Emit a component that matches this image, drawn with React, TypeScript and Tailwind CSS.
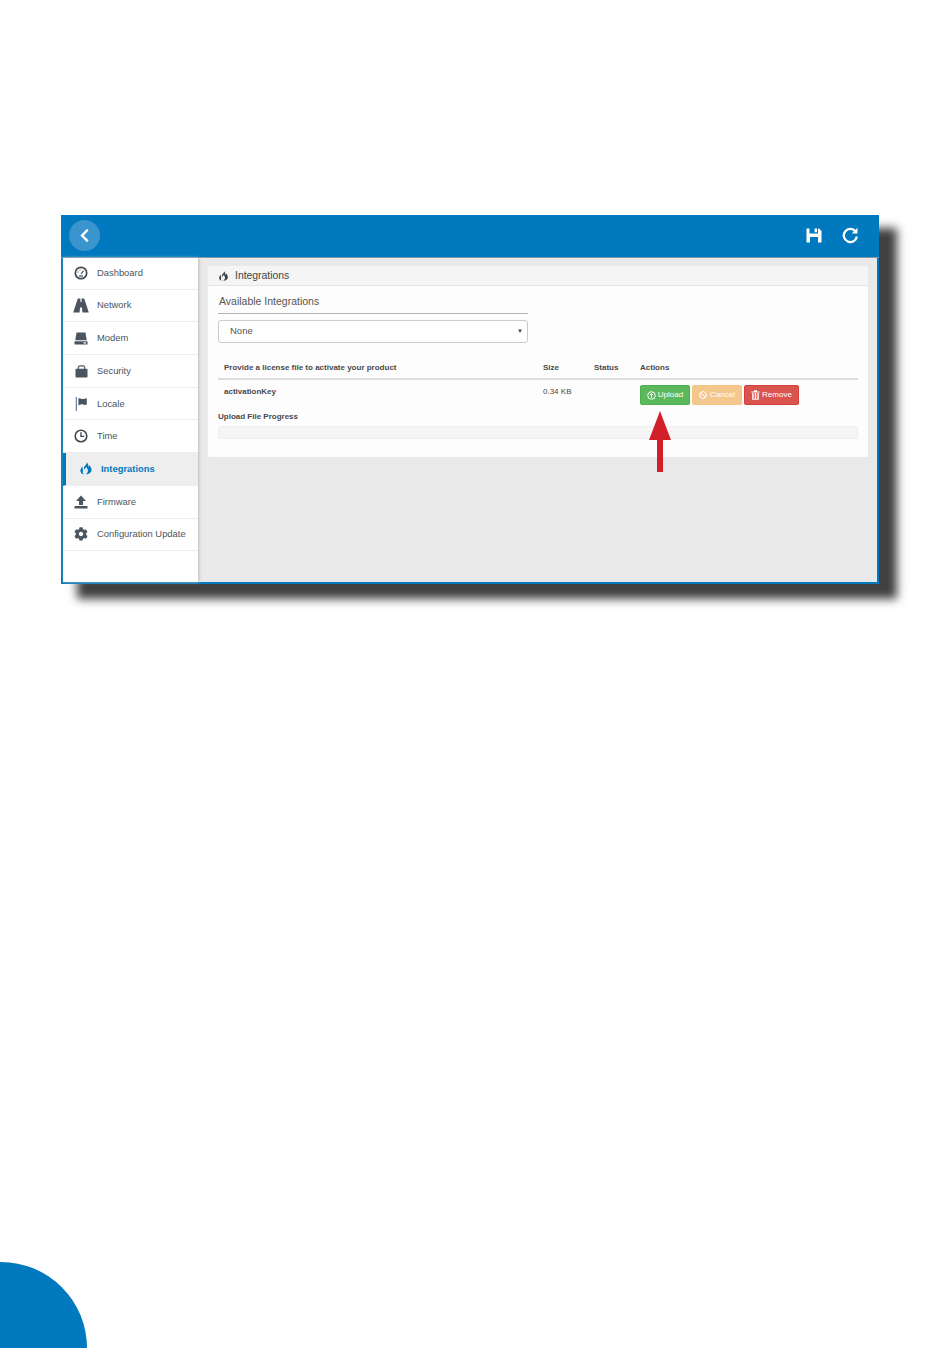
import React from 'react';
import { FaChevronLeft, FaBan, FaCog } from 'react-icons/fa';

const Gauge = () => (
  <svg viewBox="0 0 14 14" className="w-[14px] h-[14px]">
    <circle cx="7" cy="7" r="5.7" fill="#fff" stroke="#3f4a54" strokeWidth="1.7" />
    <path d="M7 8 L9.6 4.6" stroke="#3f4a54" strokeWidth="1.1" />
    <circle cx="4" cy="6" r="0.7" fill="#5b7fa0" />
    <circle cx="6" cy="4" r="0.7" fill="#a87b5b" />
    <rect x="5" y="9.4" width="4" height="1.2" fill="#3f4a54" />
  </svg>
);

const Road = () => (
  <svg viewBox="0 0 16 15" className="w-[16px] h-[15px]" fill="#4a5560">
    <path d="M4.8 0.5 H7.4 V4 H8.6 V0.5 H11.2 L15.8 14.5 H9.4 L9 9.5 H7 L6.6 14.5 H0.2 Z" />
  </svg>
);

const Drive = () => (
  <svg viewBox="0 0 14 13" className="w-[14px] h-[13px]" fill="#4a5560">
    <path d="M2.6 0.5 H11.4 L12.8 8.3 H1.2 Z" />
    <path d="M0.5 9.2 H13.5 V12.5 H0.5 Z M9.5 10.3 V11.4 H12 V10.3 Z" fillRule="evenodd" />
  </svg>
);

const Lock = () => (
  <svg viewBox="0 0 13 14" className="w-[13px] h-[14px]" fill="#4a5560">
    <path d="M3.4 5 V3.4 C3.4 1.2 9.6 1.2 9.6 3.4 V5" fill="none" stroke="#6b747d" strokeWidth="1.4" />
    <rect x="0.5" y="4.8" width="12" height="8.7" rx="0.8" />
  </svg>
);

const Flag = () => (
  <svg viewBox="0 0 13 14" className="w-[13px] h-[14px]" fill="#4a5560">
    <rect x="0.8" y="0" width="1" height="14" fill="#4a6a8a" />
    <path d="M3.4 1.6 C5.4 0.4 6.6 2.4 8.2 2 L11.8 1.2 V7.6 C9.6 8.8 7.6 7 6 7.4 L3.4 8.2 Z" />
  </svg>
);

const Clock = () => (
  <svg viewBox="0 0 14 14" className="w-[14px] h-[14px]" fill="none" stroke="#3f4a54">
    <circle cx="7" cy="7" r="5.8" strokeWidth="1.6" />
    <path d="M7 3.2 V7.4 H10.2" strokeWidth="1.4" />
  </svg>
);

const Firmware = () => (
  <svg viewBox="0 0 14 14" className="w-[14px] h-[14px]" fill="#4a5560">
    <path d="M7 0.5 L12 6 H9 V10 H5 V6 H2 Z" />
    <rect x="0.5" y="11" width="13" height="2.5" />
  </svg>
);

const Fire = ({ size }: { size: number }) => (
  <svg viewBox="0 0 14 15" width={size} height={size} fill="currentColor">
    <path d="M7.6 0.3 C8.2 2.6 5.9 3.6 5.1 5.2 C4.5 6.5 5 7.6 5.7 8.2 C5.9 6.9 6.7 6 7.9 5.4 C7.7 6.9 9.3 7.6 9.1 9.6 C9 11.2 7.9 12.2 6.7 13.2 C9.9 13.4 12.9 11.6 13 8.4 C13.1 6.2 11.4 5.2 11.2 3.4 C10.2 4 9.8 4.7 9.7 5.4 C9.5 3.2 9.2 1.4 7.6 0.3 Z" />
    <path d="M3.4 3.6 C3.6 5 2.2 5.8 1.4 7.4 C0.4 9.6 1.4 12.6 4.8 13.4 C3.4 12 3.2 10.6 4 9.2 C3.1 7.2 3.2 5.4 3.4 3.6 Z" />
  </svg>
);

const Floppy = () => (
  <svg viewBox="0 0 16 15" className="w-[16px] h-[15px]" fill="#fff">
    <path fillRule="evenodd" d="M0.5 0.5 H3.5 V5.5 H12 V0.5 H13 L15.5 3 V14.5 H0.5 Z M4 9 V14.5 H12 V9 Z M8.6 0.5 H11 V4.3 H8.6 Z" />
  </svg>
);

const Refresh = () => (
  <svg viewBox="0 0 16 16" className="w-[17px] h-[17px]" fill="none" stroke="#fff">
    <path d="M12.8 4.2 A6.2 6.2 0 1 0 14 9" strokeWidth="2.2" />
    <path d="M14.6 0.8 V6.2 H9.2 Z" fill="#fff" stroke="none" />
  </svg>
);

const CircleUp = () => (
  <svg viewBox="0 0 10 10" className="w-[9px] h-[9px]" fill="none" stroke="#fff">
    <circle cx="5" cy="5" r="4.2" strokeWidth="1.1" />
    <path d="M5 7.6 V3 M3.2 4.6 L5 2.8 L6.8 4.6" strokeWidth="1.1" />
  </svg>
);

const Trash = () => (
  <svg viewBox="0 0 9 10" className="w-[9px] h-[10px]" fill="#fff">
    <path d="M0.3 1.4 H3 V0.3 H6 V1.4 H8.7 V2.4 H0.3 Z" />
    <path d="M1.2 3 H2.6 V9.8 H1.2 Z M3.8 3 H5.2 V9.8 H3.8 Z M6.4 3 H7.8 V9.8 H6.4 Z M1.2 8.8 H7.8 V9.8 H1.2 Z" />
  </svg>
);

const items = [
  { label: 'Dashboard', icon: <Gauge /> },
  { label: 'Network', icon: <Road /> },
  { label: 'Modem', icon: <Drive /> },
  { label: 'Security', icon: <Lock /> },
  { label: 'Locale', icon: <Flag /> },
  { label: 'Time', icon: <Clock /> },
  { label: 'Integrations', icon: <Fire size={14} />, active: true },
  { label: 'Firmware', icon: <Firmware /> },
  { label: 'Configuration Update', icon: <FaCog size={14} /> },
];

export default function App() {
  return (
    <div className="relative flex flex-col justify-between w-[950px] h-[1348px] bg-white overflow-hidden font-['Liberation_Sans',Arial,sans-serif]">
      <div className="pt-[215px] pl-[61px]">
        <div className="relative flex flex-col w-[818px] h-[369px] border-2 border-t-0 border-[#0079bf] shadow-[17px_14px_9px_1px_#404040]">
          {/* top bar */}
          <div className="flex items-center justify-between h-[43px] -mx-[2px] pl-[8px] pr-[20px] bg-[#0079bf] border-b border-[#7d98a8]">
            <div className="flex items-center justify-center w-[31px] h-[31px] rounded-full bg-[#3a95cf] text-white mb-[2px]">
              <FaChevronLeft size={15} />
            </div>
            <div className="flex items-center gap-[20px] mb-[2px]">
              <Floppy />
              <Refresh />
            </div>
          </div>

          <div className="flex flex-1 min-h-0">
            {/* sidebar */}
            <div className="w-[135px] bg-white shadow-[1px_0_3px_#bbbbbb] z-10 shrink-0">
              <div className="-mt-[1px]">
                {items.map(item => (
                  <div
                    key={item.label}
                    className={
                      item.active
                        ? 'flex items-center h-[32.7px] border-b border-[#eeeeee] border-l-[3px] border-l-[#0079bf] bg-[#eeeeee] text-[#0079bf] font-bold text-[9.4px]'
                        : 'flex items-center h-[32.7px] border-b border-[#eeeeee] text-[#4a5560] text-[9.4px]'
                    }
                  >
                    <span className={item.active ? 'flex justify-center w-[35px] pl-[4px] shrink-0' : 'flex justify-center w-[34px] pl-[2px] shrink-0 text-[#4a5560]'}>
                      {item.icon}
                    </span>
                    <span className="whitespace-nowrap">{item.label}</span>
                  </div>
                ))}
              </div>
            </div>

            {/* content */}
            <div className="flex-1 bg-[#e9e9e9] pt-[8px] pl-[10px] pr-[9px]">
              <div className="h-[191px] bg-[#fdfdfd] rounded-[2px]">
                <div className="flex items-center gap-[6px] h-[20px] pl-[10px] pt-[1px] bg-[#f5f5f5] border-b border-[#e6e6e6] text-[#444444] text-[10.4px]">
                  <Fire size={11} />
                  <span>Integrations</span>
                </div>

                <div className="px-[10px]">
                  <div className="w-[310px] h-[28px] pt-[9px] pl-[1px] border-b border-[#b5b5b5] text-[#555555] text-[10.5px] leading-[13px]">
                    Available Integrations
                  </div>
                  <div className="flex items-center justify-between w-[310px] h-[23px] mt-[6px] pl-[11px] pr-[4px] bg-white border border-[#cccccc] rounded-[3px] text-[#555555] text-[9.5px]">
                    <span>None</span>
                    <span className="text-[6px] text-[#444444]">▼</span>
                  </div>

                  <div className="grid grid-cols-[319px_51px_46px_1fr] items-center h-[20px] mt-[17px] pl-[6px] pb-[3px] border-b-2 border-[#dddddd] text-[#4a4a4a] font-bold text-[8px]">
                    <span className="whitespace-nowrap">Provide a license file to activate your product</span>
                    <span>Size</span>
                    <span>Status</span>
                    <span>Actions</span>
                  </div>

                  <div className="grid grid-cols-[319px_51px_46px_1fr] h-[26px] pl-[6px] pt-[6px] text-[#4a4a4a] text-[8px]">
                    <span className="font-bold">activationKey</span>
                    <span>0.34 KB</span>
                    <span></span>
                    <div className="flex items-start gap-[2px] -mt-[1px]">
                      <button className="flex items-center justify-center gap-[2px] w-[50px] h-[20px] bg-[#5cb85c] border border-[#4cae4c] rounded-[2px] text-white">
                        <CircleUp />
                        Upload
                      </button>
                      <button className="flex items-center justify-center gap-[3px] w-[50px] h-[20px] bg-[#f4c88c] border border-[#f2c584] rounded-[2px] text-white">
                        <FaBan size={8} />
                        Cancel
                      </button>
                      <button className="flex items-center justify-center gap-[2px] w-[55px] h-[20px] bg-[#d9534f] border border-[#d43f3a] rounded-[2px] text-white">
                        <Trash />
                        Remove
                      </button>
                    </div>
                  </div>

                  <div className="mt-[6px] text-[#4a4a4a] font-bold text-[8px] leading-[10px]">Upload File Progress</div>
                  <div className="h-[13px] mt-[4px] bg-[#f5f5f5] border border-[#eeeeee] rounded-[2px]"></div>
                </div>
              </div>
            </div>
          </div>

          {/* red arrow over the panel */}
          <svg className="absolute left-[584px] top-[195px] z-20" width="26" height="64" viewBox="0 0 26 64">
            <path d="M13 1 L24 30 H16 V62 H10 V30 H2 Z" fill="#d2202a" />
          </svg>
        </div>
      </div>

      {/* page corner */}
      <div className="w-[87px] h-[86px] bg-[#0079bf] rounded-tr-[87px]"></div>
    </div>
  );
}
